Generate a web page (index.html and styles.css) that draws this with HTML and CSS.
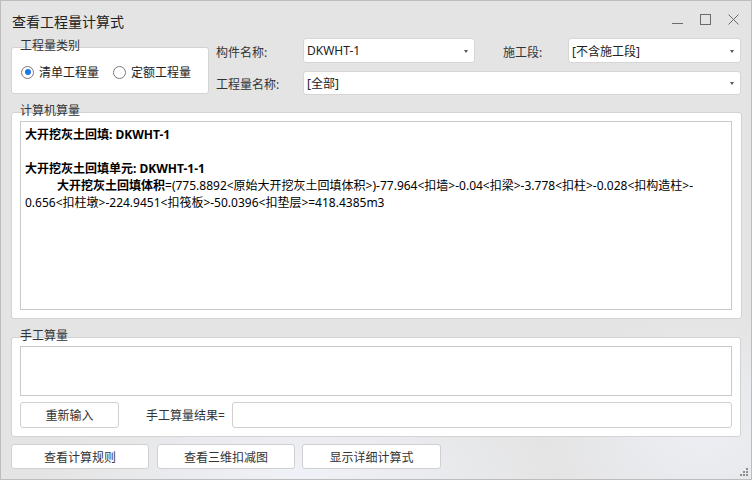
FILE: index.html
```html
<!DOCTYPE html>
<html lang="zh-CN">
<head>
<meta charset="utf-8">
<title>查看工程量计算式</title>
<link rel="stylesheet" href="styles.css">
</head>
<body>
<div class="window">
  <div class="titlebar">
    <div class="title">查看工程量计算式</div>
    <div class="controls">
      <svg class="ctl" width="11" height="11" viewBox="0 0 11 11"><path d="M0 9.5h11" stroke="#6b6b6b" stroke-width="1"/></svg>
      <svg class="ctl" width="11" height="11" viewBox="0 0 11 11"><rect x="0.5" y="0.5" width="10" height="10" fill="none" stroke="#6b6b6b" stroke-width="1"/></svg>
      <svg class="ctl" width="11" height="11" viewBox="0 0 11 11"><path d="M0.5 0.5L10.5 10.5M10.5 0.5L0.5 10.5" stroke="#6b6b6b" stroke-width="1"/></svg>
    </div>
  </div>

  <div class="top">
    <div class="group g-type">
      <span class="legend">工程量类别</span>
      <label class="radio"><span class="dot checked"></span>清单工程量</label>
      <label class="radio"><span class="dot"></span>定额工程量</label>
    </div>
    <div class="fields">
      <span class="lbl">构件名称:</span>
      <div class="select">DKWHT-1<i class="arrow"></i></div>
      <span class="lbl lbl-seg">施工段:</span>
      <div class="select">[不含施工段]<i class="arrow"></i></div>
      <span class="lbl">工程量名称:</span>
      <div class="select wide">[全部]<i class="arrow"></i></div>
    </div>
  </div>

  <div class="group g-calc">
    <span class="legend">计算机算量</span>
    <div class="output">
      <div class="b">大开挖灰土回填: DKWHT-1</div>
      <div class="blank"></div>
      <div class="b">大开挖灰土回填单元: DKWHT-1-1</div>
      <div class="formula"><span class="indent"></span><b>大开挖灰土回填体积</b>=(775.8892&lt;原始大开挖灰土回填体积&gt;)-77.964&lt;扣墙&gt;-0.04&lt;扣梁&gt;-3.778&lt;扣柱&gt;-0.028&lt;扣构造柱&gt;-<br>0.656&lt;扣柱墩&gt;-224.9451&lt;扣筏板&gt;-50.0396&lt;扣垫层&gt;=418.4385m3</div>
    </div>
  </div>

  <div class="group g-manual">
    <span class="legend">手工算量</span>
    <div class="manual-input"></div>
    <div class="manual-row">
      <div class="btn btn-small">重新输入</div>
      <span class="result-lbl">手工算量结果=</span>
      <div class="result-input"></div>
    </div>
  </div>

  <div class="actions">
    <div class="btn btn-a">查看计算规则</div>
    <div class="btn btn-b">查看三维扣减图</div>
    <div class="btn btn-c">显示详细计算式</div>
  </div>

  <svg class="grip" width="10" height="10" viewBox="0 0 10 10">
    <rect x="7" y="1" width="2" height="2" fill="#8c8c8c"/>
    <rect x="4" y="4" width="2" height="2" fill="#8c8c8c"/>
    <rect x="7" y="4" width="2" height="2" fill="#8c8c8c"/>
    <rect x="1" y="7" width="2" height="2" fill="#8c8c8c"/>
    <rect x="4" y="7" width="2" height="2" fill="#8c8c8c"/>
    <rect x="7" y="7" width="2" height="2" fill="#8c8c8c"/>
  </svg>
</div>
</body>
</html>
```

FILE: styles.css
```css
* { box-sizing: border-box; }
html, body { margin: 0; padding: 0; }
body {
  font-family: "Noto Sans", "Noto Sans CJK SC", sans-serif;
  font-size: 12px;
  color: #222;
}
.window {
  position: relative;
  width: 752px;
  height: 480px;
  border: 1px solid #bdbdbd;
  background:
    radial-gradient(ellipse 260px 90px at 300px 470px, rgba(240,243,250,0.9), rgba(228,228,228,0)),
    radial-gradient(ellipse 160px 120px at 700px 430px, rgba(238,241,248,0.8), rgba(228,228,228,0)),
    #e4e4e4;
  display: flex;
  flex-direction: column;
  overflow: hidden;
}
.titlebar {
  height: 37px;
  display: flex;
  justify-content: space-between;
  align-items: flex-start;
  flex: none;
}
.title {
  font-size: 14px;
  line-height: 20px;
  padding: 11px 0 0 11px;
  color: #222;
}
.controls {
  display: flex;
  gap: 17px;
  padding: 13px 12px 0 0;
}
.ctl { display: block; }

.top {
  display: flex;
  align-items: flex-start;
  padding: 0 10px;
  flex: none;
}
.group {
  position: relative;
  background: #fff;
  border: 1px solid #d3d3d3;
  border-radius: 3px;
}
.legend {
  position: absolute;
  left: 8px;
  top: -11px;
  line-height: 18px;
  font-size: 12px;
  color: #333;
}
.g-type {
  margin-top: 9px;
  width: 198px;
  height: 47px;
  display: flex;
  align-items: center;
  padding: 3px 0 0 9px;
  flex: none;
}
.radio {
  display: flex;
  align-items: center;
  color: #222;
  margin-right: 14px;
}
.dot {
  width: 13px;
  height: 13px;
  border: 1px solid #7a7a7a;
  border-radius: 50%;
  margin-right: 5px;
  position: relative;
  background: #fff;
}
.dot.checked::after {
  content: "";
  position: absolute;
  left: 2.5px;
  top: 2.5px;
  width: 6px;
  height: 6px;
  border-radius: 50%;
  background: #1f77e8;
}
.fields {
  margin-left: 7px;
  display: grid;
  grid-template-columns: 87px 172px 93px 1fr;
  grid-template-rows: 25px 24px;
  row-gap: 8px;
  flex: 1;
}
.lbl {
  display: flex;
  align-items: center;
  padding-top: 2px;
  color: #333;
}
.lbl-seg { padding-left: 28px; }
.select {
  position: relative;
  background: #fff;
  border: 1px solid #d6d6d6;
  border-radius: 3px;
  display: flex;
  align-items: center;
  padding-left: 3px;
  color: #222;
}
.select.wide { grid-column: 2 / 5; }
.arrow {
  position: absolute;
  right: 6px;
  top: 50%;
  margin-top: -1px;
  width: 0;
  height: 0;
  border-left: 2.5px solid transparent;
  border-right: 2.5px solid transparent;
  border-top: 3px solid #555;
}

.g-calc {
  margin: 17px 9px 0 10px;
  height: 207px;
  padding: 8px 9px 8px 8px;
  display: flex;
  flex: none;
}
.output {
  flex: 1;
  border: 1px solid #c9c9c9;
  background: #fff;
  padding: 4px 4px;
  line-height: 17px;
  color: #000;
}
.b { font-weight: bold; }
.blank { height: 17px; }
.formula b { font-weight: bold; }
.indent { display: inline-block; width: 32px; }

.g-manual {
  margin: 18px 10px 0 10px;
  height: 100px;
  padding: 8px 8px 8px 8px;
  display: flex;
  flex-direction: column;
  flex: none;
}
.manual-input {
  height: 50px;
  border: 1px solid #c9c9c9;
  background: #fff;
}
.manual-row {
  margin-top: 6px;
  height: 26px;
  display: flex;
  align-items: center;
}
.btn {
  height: 26px;
  background: #fff;
  border: 1px solid #d0d0d0;
  border-radius: 3px;
  display: flex;
  align-items: center;
  justify-content: center;
  color: #333;
  flex: none;
}
.btn-small { width: 99px; }
.result-lbl {
  margin-left: 27px;
  width: 86px;
  color: #333;
}
.result-input {
  flex: 1;
  height: 26px;
  background: #fff;
  border: 1px solid #d0d0d0;
  border-radius: 3px;
}
.actions {
  margin-top: 7px;
  padding-left: 10px;
  display: flex;
  flex: none;
}
.actions .btn { height: 25px; }
.btn-a { width: 138px; }
.btn-b { width: 138px; margin-left: 8px; }
.btn-c { width: 139px; margin-left: 7px; }
.grip {
  position: absolute;
  right: 2px;
  bottom: 2px;
}
```
